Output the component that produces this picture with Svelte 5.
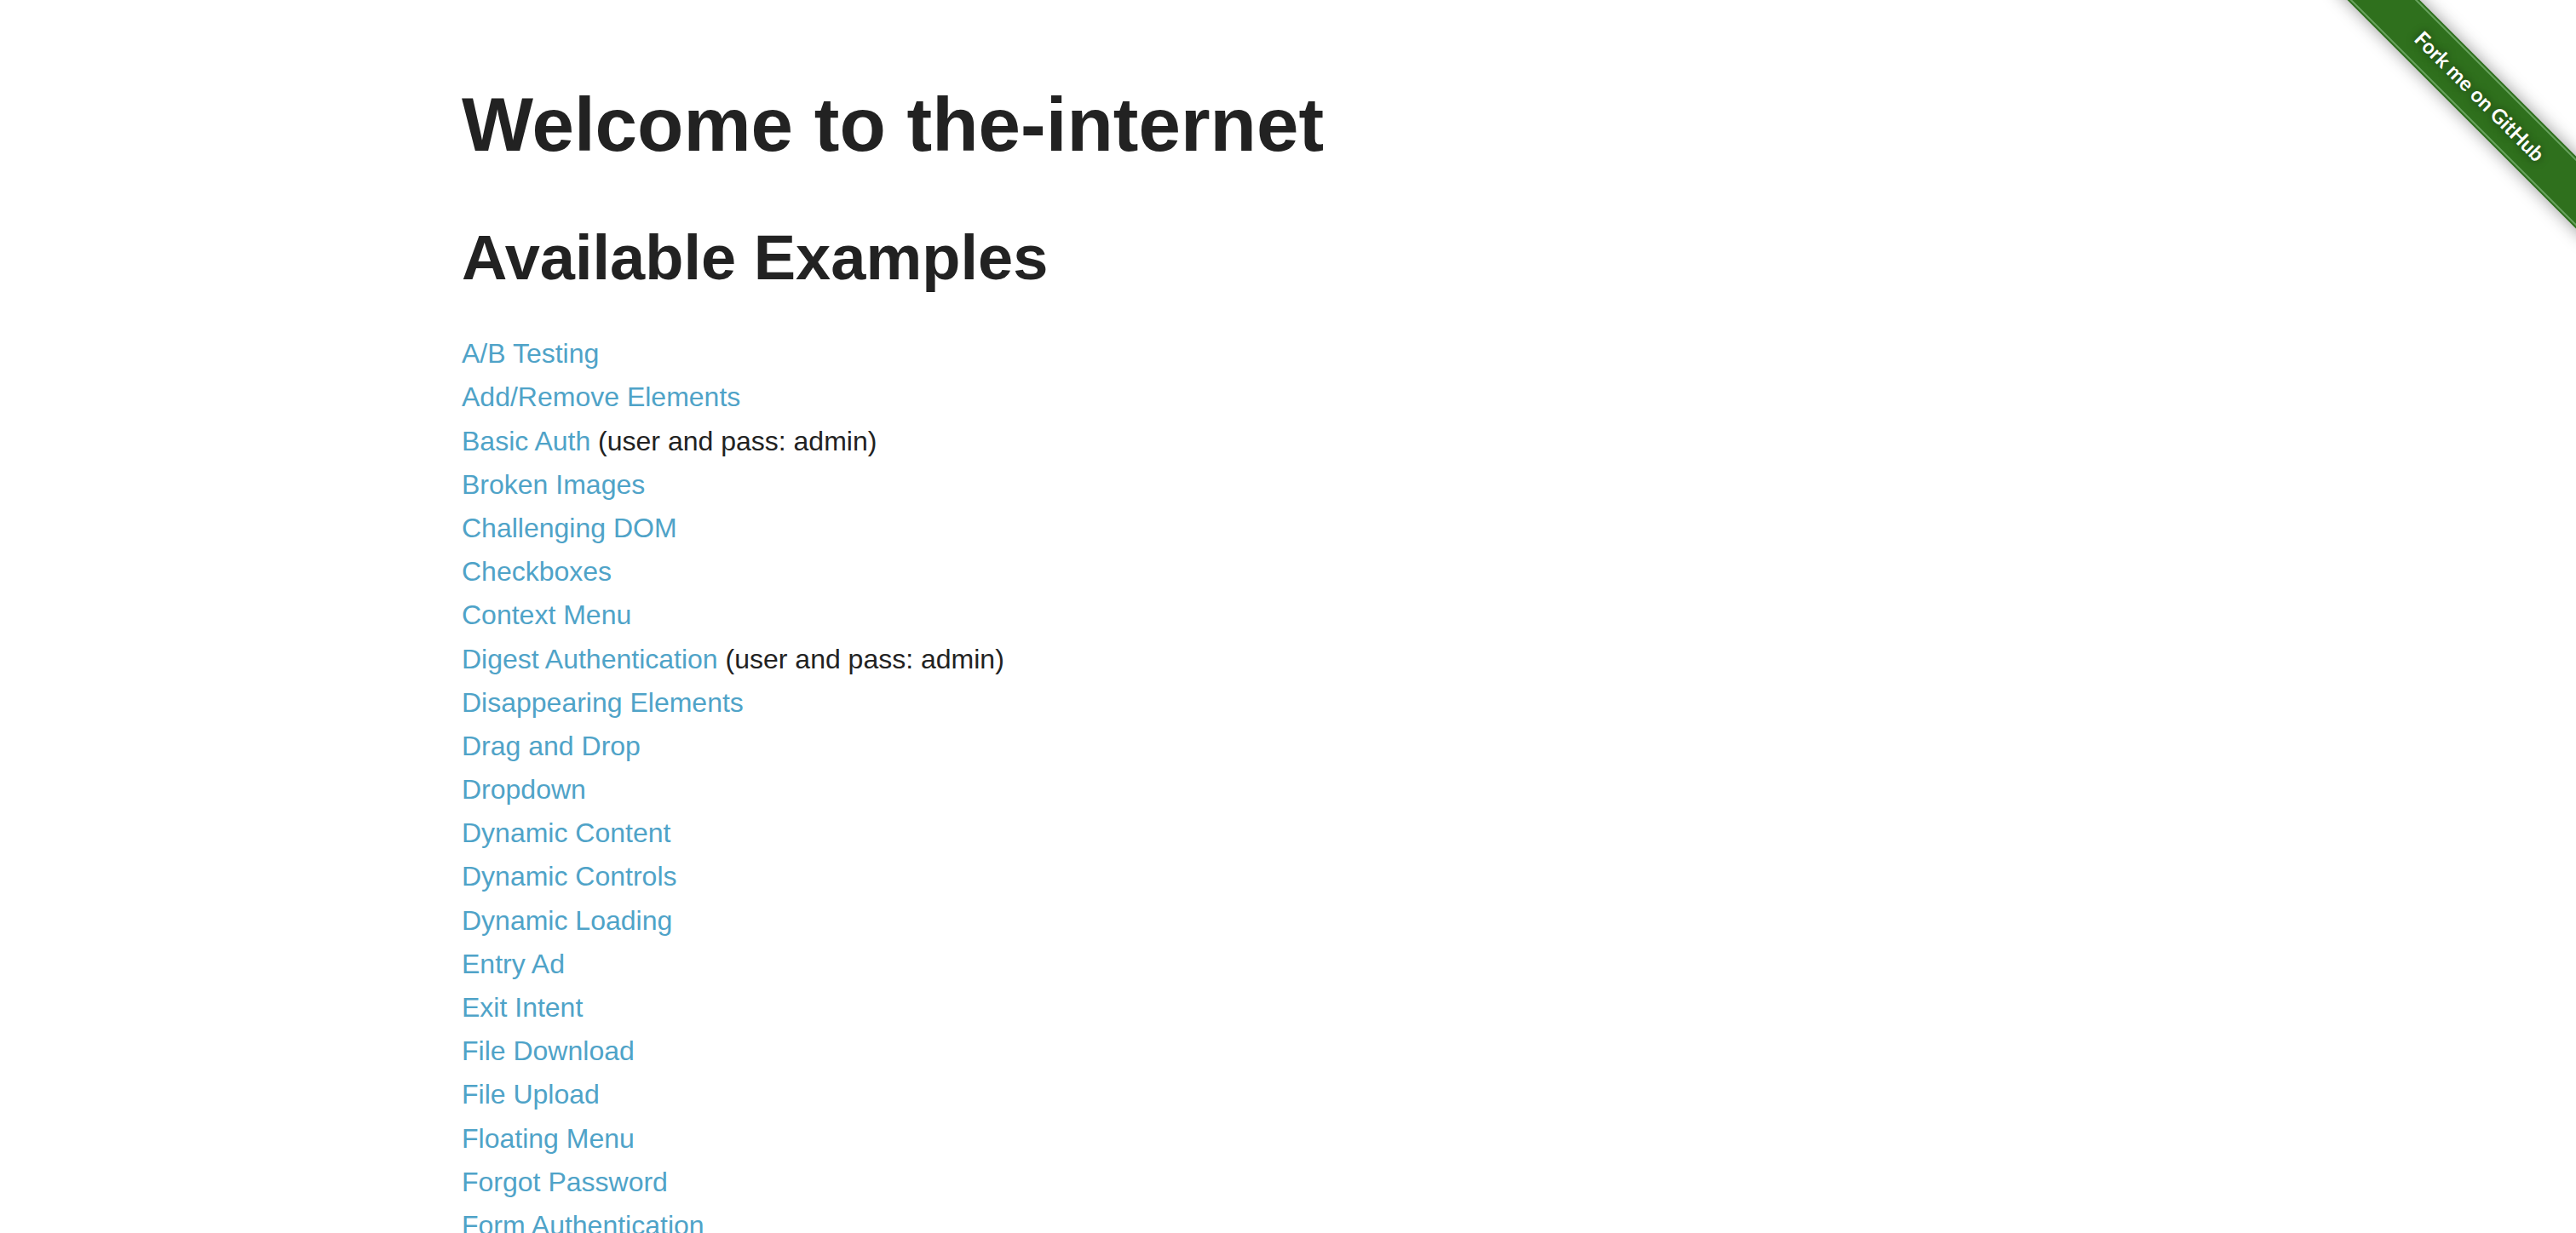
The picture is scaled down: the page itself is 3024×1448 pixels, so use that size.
<script>
  const examples = [
    { name: 'A/B Testing', path: 'abtest' },
    { name: 'Add/Remove Elements', path: 'add_remove_elements' },
    { name: 'Basic Auth', path: 'basic_auth', note: '(user and pass: admin)' },
    { name: 'Broken Images', path: 'broken_images' },
    { name: 'Challenging DOM', path: 'challenging_dom' },
    { name: 'Checkboxes', path: 'checkboxes' },
    { name: 'Context Menu', path: 'context_menu' },
    { name: 'Digest Authentication', path: 'digest_auth', note: '(user and pass: admin)' },
    { name: 'Disappearing Elements', path: 'disappearing_elements' },
    { name: 'Drag and Drop', path: 'drag_and_drop' },
    { name: 'Dropdown', path: 'dropdown' },
    { name: 'Dynamic Content', path: 'dynamic_content' },
    { name: 'Dynamic Controls', path: 'dynamic_controls' },
    { name: 'Dynamic Loading', path: 'dynamic_loading' },
    { name: 'Entry Ad', path: 'entry_ad' },
    { name: 'Exit Intent', path: 'exit_intent' },
    { name: 'File Download', path: 'download' },
    { name: 'File Upload', path: 'upload' },
    { name: 'Floating Menu', path: 'floating_menu' },
    { name: 'Forgot Password', path: 'forgot_password' },
    { name: 'Form Authentication', path: 'login' }
  ];
</script>

<div class="page">
  <div class="ribbon">
    <a class="band" href="https://github.com/tourdedave/the-internet">Fork me on GitHub</a>
  </div>

  <main class="content">
    <h1>Welcome to the-internet</h1>
    <h2>Available Examples</h2>
    <ul>
      {#each examples as example}
        <li><a href="/{example.path}">{example.name}</a>{#if example.note}{' '}{example.note}{/if}</li>
      {/each}
    </ul>
  </main>
</div>

<style>
  :global(body) {
    margin: 0;
    background: #fff;
  }

  .page {
    position: relative;
    box-sizing: border-box;
    height: 100vh;
    overflow: hidden;
    padding-top: 84px;
    color: #222;
    font-family: "Helvetica Neue", Helvetica, "Liberation Sans", Arial, sans-serif;
    font-size: 32px;
    line-height: 1.6;
  }

  .content {
    box-sizing: border-box;
    max-width: 2000px;
    margin: 0 auto;
    padding: 0 30px;
  }

  h1,
  h2 {
    margin: 0;
    font-weight: 700;
    line-height: 1.4;
  }

  h1 {
    margin-bottom: 42px;
    font-size: 89px;
  }

  h2 {
    margin-bottom: 36px;
    font-size: 74px;
  }

  ul {
    margin: 0;
    padding: 0;
    list-style: none;
  }

  li a {
    color: #4fa3c8;
    text-decoration: none;
  }

  .ribbon {
    position: absolute;
    top: 0;
    right: 0;
    width: 298px;
    height: 298px;
    overflow: hidden;
  }

  .band {
    position: absolute;
    top: 83px;
    left: -25px;
    width: 420px;
    height: 60px;
    background: #2f701d;
    box-shadow: 0 0 20px rgba(0, 0, 0, 0.4);
    color: #fff;
    font-family: Lato, "Open Sans", sans-serif;
    font-size: 24px;
    font-weight: 700;
    line-height: 60px;
    text-align: center;
    text-decoration: none;
    text-shadow: 0 0 10px rgba(0, 0, 0, 0.5);
    transform: rotate(45deg);
  }

  .band::before {
    content: "";
    position: absolute;
    inset: 2px 0;
    border: solid #68a35e;
    border-width: 2px 0;
  }
</style>
